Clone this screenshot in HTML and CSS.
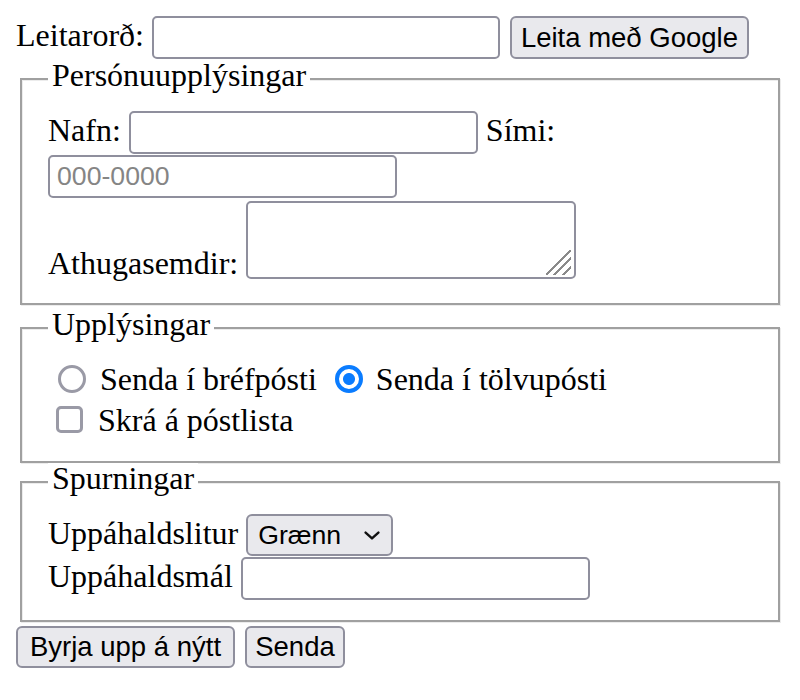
FILE: index.html
```html
<!DOCTYPE html>
<html lang="is">
<head>
<meta charset="utf-8">
<title>Eyðublað</title>
<link rel="stylesheet" href="styles.css">
</head>
<body>
<form class="form">
  <div class="row row-top">
    <label class="lbl" for="q">Leitarorð:</label>
    <input class="field field-wide gap-8" id="q" type="text">
    <button class="btn btn-search gap-10" type="button">Leita með Google</button>
  </div>

  <fieldset class="group group-first">
    <legend class="legend">Persónuupplýsingar</legend>
    <div class="row">
      <label class="lbl" for="nafn">Nafn:</label>
      <input class="field gap-8" id="nafn" type="text">
      <label class="lbl gap-8" for="simi">Sími:</label>
    </div>
    <div class="row row-next">
      <input class="field" id="simi" type="tel" placeholder="000-0000">
    </div>
    <div class="row row-next row-end">
      <label class="lbl lbl-low" for="ath">Athugasemdir:</label>
      <textarea class="notes gap-8" id="ath"></textarea>
    </div>
  </fieldset>

  <fieldset class="group group-second">
    <legend class="legend">Upplýsingar</legend>
    <div class="row row-opt">
      <input class="radio radio-first" type="radio" name="senda" id="r1">
      <label class="lbl opt-lbl" for="r1">Senda í bréfpósti</label>
      <input class="radio radio-next" type="radio" name="senda" id="r2" checked>
      <label class="lbl opt-lbl-2" for="r2">Senda í tölvupósti</label>
    </div>
    <div class="row row-next row-opt">
      <input class="check" type="checkbox" id="c1">
      <label class="lbl check-lbl" for="c1">Skrá á póstlista</label>
    </div>
  </fieldset>

  <fieldset class="group group-third">
    <legend class="legend">Spurningar</legend>
    <div class="row">
      <label class="lbl" for="litur">Uppáhaldslitur</label>
      <span class="select-wrap gap-8">
        <select class="select" id="litur">
          <option>Grænn</option>
          <option>Rauður</option>
          <option>Blár</option>
        </select>
        <svg class="chev" viewBox="0 0 16 9" width="16" height="9" aria-hidden="true"><path d="M1.6 1.6 L8 7.4 L14.4 1.6" fill="none" stroke="#111" stroke-width="2.4" stroke-linecap="round" stroke-linejoin="round"/></svg>
      </span>
    </div>
    <div class="row row-next">
      <label class="lbl" for="mal">Uppáhaldsmál</label>
      <input class="field gap-8" id="mal" type="text">
    </div>
  </fieldset>

  <div class="row row-buttons">
    <button class="btn btn-reset" type="reset">Byrja upp á nýtt</button>
    <button class="btn btn-send gap-10" type="submit">Senda</button>
  </div>
</form>
</body>
</html>
```

FILE: styles.css
```css
html, body {
  background: #ffffff;
}

body {
  margin: 16px;
  font-family: "Liberation Serif", "Times New Roman", serif;
  font-size: 32px;
  color: #000000;
}

.form {
  margin: 0;
}

.row {
  display: flex;
  align-items: flex-start;
}

.row-top {
  height: 44px;
}

.row-next {
  margin-top: 1px;
}

.row-end {
  align-items: flex-end;
}

.row-opt {
  min-height: 40px;
}

.lbl {
  display: block;
  line-height: 38px;
  white-space: nowrap;
}

.lbl-low {
  line-height: 40px;
}

/* text fields */
.field {
  box-sizing: border-box;
  width: 349px;
  height: 43px;
  margin: 0;
  padding: 0 7px;
  border: 2px solid #8f8f9d;
  border-radius: 5px;
  background: #ffffff;
  font-family: "Liberation Sans", Arial, sans-serif;
  font-size: 26.67px;
  color: #000000;
  outline: none;
}

.field-wide {
  width: 348px;
}

.field::placeholder {
  color: #858585;
  opacity: 1;
}

.notes {
  box-sizing: border-box;
  width: 330px;
  height: 78px;
  margin-top: 2px;
  margin-bottom: 4px;
  padding: 4px 7px;
  border: 2px solid #8f8f9d;
  border-radius: 5px;
  resize: none;
  outline: none;
  font-family: "Liberation Sans", Arial, sans-serif;
  font-size: 26.67px;
  background-color: #ffffff;
  background-image: linear-gradient(135deg,
    transparent 0 47%,
    #8a8a8a 47% 53%,
    transparent 53% 64%,
    #8a8a8a 64% 70%,
    transparent 70% 81%,
    #8a8a8a 81% 87%,
    transparent 87%);
  background-size: 25px 25px;
  background-repeat: no-repeat;
  background-origin: border-box;
  background-position: right 5px bottom 4px;
  display: block;
}

/* buttons */
.btn {
  box-sizing: border-box;
  height: 43px;
  margin: 0;
  padding: 0;
  border: 2px solid #8f8f9d;
  border-radius: 6px;
  background: #e9e9ed;
  color: #000000;
  font-family: "Liberation Sans", Arial, sans-serif;
  font-size: 27.5px;
  text-align: center;
  white-space: nowrap;
}

.btn-search {
  width: 239px;
}

.row-buttons {
  margin-top: 4px;
}

.btn-reset {
  width: 219px;
  height: 42px;
}

.btn-send {
  width: 100px;
  height: 42px;
}

/* fieldsets */
.group {
  margin: 4px 4px 0;
  padding: 13px 26px 20px;
  border: 2px solid #a0a0a0;
  box-shadow: inset 1px 1px 0 #ececec, 1px 1px 0 #ececec;
  min-inline-size: 0;
}

.group-first {
  margin-top: 0;
}

.group-third {
  margin-top: 0;
}

.legend {
  padding: 0 4px 8px;
  line-height: 30px;
  background: #ffffff;
}

/* radio & checkbox */
.radio {
  appearance: none;
  -webkit-appearance: none;
  box-sizing: border-box;
  width: 28px;
  height: 28px;
  margin: 5px 0 0;
  border: 3px solid #9a9aa6;
  border-radius: 50%;
  background: #ffffff;
}

.radio:checked {
  border: 4px solid #0a7cff;
  background: radial-gradient(circle, #0a7cff 0 5.5px, #ffffff 6.5px);
}

.radio-first {
  margin-left: 10px;
}

.radio-next {
  margin-left: 18px;
}

.opt-lbl {
  margin-left: 14px;
}

.opt-lbl-2 {
  margin-left: 13px;
}

.check {
  appearance: none;
  -webkit-appearance: none;
  box-sizing: border-box;
  width: 27px;
  height: 27px;
  margin: 5px 0 0 8px;
  border: 3px solid #9a9aa6;
  border-radius: 5px;
  background: #ffffff;
}

.check-lbl {
  margin-left: 15px;
}

/* select */
.select-wrap {
  position: relative;
  display: block;
}

.select {
  appearance: none;
  -webkit-appearance: none;
  box-sizing: border-box;
  display: block;
  width: 147px;
  height: 42px;
  margin: 0;
  padding: 0 30px 0 10px;
  border: 2px solid #8f8f9d;
  border-radius: 6px;
  background: #e9e9ed;
  color: #000000;
  font-family: "Liberation Sans", Arial, sans-serif;
  font-size: 26.67px;
  outline: none;
}

.chev {
  position: absolute;
  right: 13px;
  top: 17px;
  pointer-events: none;
}

/* spacing helpers (last, so they win over component margins) */
.row .gap-8 {
  margin-left: 8px;
}

.row .gap-10 {
  margin-left: 10px;
}
```
